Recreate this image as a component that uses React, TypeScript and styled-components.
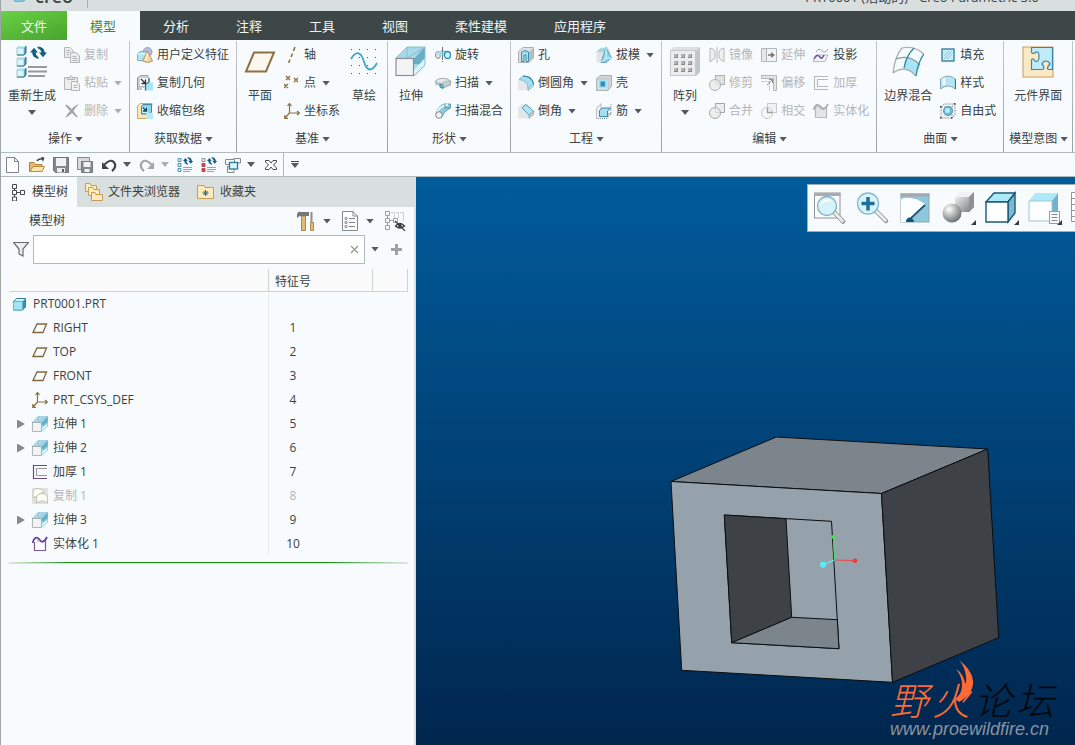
import React from 'react';
import styled, { createGlobalStyle, css } from 'styled-components';

const FONT = '"Open Sans", "Noto Sans CJK SC", sans-serif';
const C = {
  panel: '#f8fbfd',
  frame: '#d9dfde',
  line: '#b0baba',
  text: '#3c4142',
  muted: '#b2b6b8',
  dark: '#3d4748',
};

const GlobalStyle = createGlobalStyle`
  *, *::before, *::after { box-sizing: border-box; }
  body { margin: 0; font-family: ${FONT}; font-size: 12px; line-height: 16px; color: ${C.text}; }
  button, input { font: inherit; color: inherit; }
`;

/* ---------- icons ---------- */

const Cube = ({ x, y, s = 9 }: { x: number; y: number; s?: number }) => (
  <g transform={`translate(${x} ${y}) scale(${s / 9})`}>
    <path d="M0 2 2 0H9V7L7 9H0Z" fill="#4f9ab5" />
    <path d="M0 2 2 0H9L7 2Z" fill="#bdeefa" />
    <rect y="2" width="7" height="7" fill="#d9f6fd" stroke="#8cb4c2" strokeWidth=".7" />
    <path d="M9 0V7L7 9H0" fill="none" stroke="#2b6f8c" strokeWidth="1" />
  </g>
);

const Spin = ({ x, y, s = 1 }: { x: number; y: number; s?: number }) => (
  <g transform={`translate(${x} ${y}) scale(${s})`} fill="#165e80">
    <path d="M0 6.5 4 1.8 8 6.5H5.6Q5.6 9.6 8.6 11.4V13Q2.4 11.6 2.2 6.5Z" />
    <path d="M17 6.5 13 11.2 9 6.5H11.4Q11.2 3.8 7.6 2.2V.4Q14.4 1 14.8 6.5Z" />
  </g>
);

const Extrude = ({ s = 1 }: { s?: number }) => (
  <g transform={`scale(${s})`}>
    <path d="M1 12 12 1H30V20L19 30Z" fill="#a9deef" />
    <path d="M12 1H30L18 13H1Z" fill="#a8d9ea" />
    <path d="M30 1V20L19 13Z" fill="#5fa3bd" />
    <path d="M30 1 19 13V18L30 19Z" fill="#6aaec7" />
    <path d="M19 30 30 19V12L19 24Z" fill="#d8f5fd" />
    <path d="M1 12 12 1H30V19L19 30M12 1V12M12 12 30 1" fill="none" stroke="#8dbccb" strokeWidth="1" />
    <rect x="1" y="12.500" width="17.500" height="17" fill="#f4f4f4" stroke="#8b9094" strokeWidth="1.200" />
  </g>
);

const icons: Record<string, React.ReactNode> = {
  regenerate: (
    <>
      <Cube x={1} y={0} />
      <Cube x={1} y={11} />
      <Cube x={1} y={22} />
      <Spin x={14} y={0} />
      <path d="M12 21H31M12 25.500H31M12 30H29" stroke="#969a9c" strokeWidth="2" />
    </>
  ),
  copy: (
    <g fill="#ececec" stroke="#b3b6b7">
      <path d="M.5 .5H6L9 3.500V10.500H.5Z" />
      <path d="M2.500 3.500H6M2.500 5.500H5M2.500 7.500H5" />
      <path d="M6.500 5.500H12L15.500 9V15.500H6.500Z" />
      <path d="M8.500 9.500H12M8.500 11.500H13.500M8.500 13.500H13.500" />
    </g>
  ),
  paste: (
    <g stroke="#b3b5b6" fill="#ececec">
      <path d="M.5 2.500H13.500V14.500H.5Z" />
      <path d="M3.500 4.500V2.500H5.500Q7 -1 8.500 2.500H10.500V4.500Z" fill="#dcdcdc" />
      <path d="M7.500 6.500H12L15.500 9.500V15.500H7.500Z" fill="#f4f4f4" />
      <path d="M9.500 10.500H13.500M9.500 12.500H13.500" />
    </g>
  ),
  remove: <path d="M1 2Q3 1 7.500 6Q11 2 15 1Q11 5 9.500 8Q12 12 14 14Q12 15 8 10Q4 14 1 15Q3 11 6 8Q3 5 1 2Z" fill="#a3a5a6" />,
  udf: (
    <>
      <circle cx="10.500" cy="5" r="4.500" fill="#b9bce0" stroke="#8c90bb" strokeWidth=".8" />
      <path d="M.5 7 3 4.500H10V11L8 13.500H.5Z" fill="#b4e4f3" stroke="#6db3cb" />
      <path d="M.5 7H8V13.500" fill="none" stroke="#e8f8fd" />
      <path d="M10.500 4 15.500 14Q10.500 17 5.500 14Z" fill="#f0d6a5" stroke="#b99259" />
      <path d="M10.300 6 9 14" stroke="#fdf3dd" strokeWidth="1.500" />
    </>
  ),
  copyGeom: (
    <>
      <path d="M.5 3 3 .5H11V5L10 9H7V12H.5Z" fill="#c9ced1" stroke="#a1a7aa" />
      <path d="M.5 3V15M.5 14H5" stroke="#8d9295" />
      <rect x="3" y="3" width="8" height="8" fill="#fff" />
      <path d="M4 4 8 8M8.500 4.500V8.500H4.500" stroke="#21323b" strokeWidth="1.300" fill="none" />
      <path d="M8.500 10 11.500 7.500H16V15.500H8.500Z" fill="#a9e4f6" />
      <path d="M12 3V7L8.500 9.500V15.500" fill="none" stroke="#24708f" strokeWidth="1.300" />
    </>
  ),
  shrink: (
    <>
      <path d="M.5 3 3 .5H15L13 15.500H.5Z" fill="#fbe8b9" stroke="#cfaa62" />
      <path d="M4.500 3.500 6 1.500H14.500V9L12.500 11H4.500Z" fill="#8ed2e6" stroke="#3f88a4" />
      <rect x="5" y="4" width="6" height="6" fill="#c7eefa" />
      <path d="M6 4.500 9 7.500M9.500 4.500V8H6" stroke="#0c475f" strokeWidth="1.300" fill="none" />
      <rect x="9.500" y="10" width="6.500" height="6" fill="#b9e9f8" />
    </>
  ),
  plane: <path d="M10 6.500H30L22 25.500H2Z" fill="#fbf7ee" stroke="#8b7243" strokeWidth="2" />,
  axis: <path d="M11 0 9.500 4M8.500 6.500 7 10M6 12.500 4.500 16" stroke="#8f753f" strokeWidth="1.600" />,
  point: (
    <path
      d="M2 1 6 5M6 1 2 5M10 3 14 7M14 3 10 7M0 9 4 13M4 9 0 13"
      stroke="#8a6f38"
      strokeWidth="1.400"
    />
  ),
  csys: (
    <path
      d="M5.500 1V10H15M5.500 10 1 15M3.500 3 5.500 .5 7.500 3M13 8 15.500 10 13 12M.8 12V15.300H4"
      fill="none"
      stroke="#8a713d"
      strokeWidth="1.200"
    />
  ),
  sketch: (
    <>
      <path
        d="M3 3.500H29M3 11.500H29M3 19.500H29M3 27.500H29"
        stroke="#565b5d"
        strokeWidth="1"
        strokeDasharray="1 7"
      />
      <path d="M3 13Q8 4 13 9C17 14 16 23 22 23.500Q26 23 29 17" fill="none" stroke="#3ea6cf" strokeWidth="1.800" />
    </>
  ),
  extrudeBig: <Extrude />,
  extrude: <Extrude s={0.52} />,
  revolve: (
    <>
      <ellipse cx="3" cy="8" rx="2.500" ry="3.500" fill="#e3e5e6" stroke="#8b9093" />
      <path d="M3 5Q8 1 13 5V11Q8 6 4 10Z" fill="#a7daea" />
      <ellipse cx="12.500" cy="8" rx="3" ry="3.500" fill="#c9f0fb" stroke="#2e8db3" strokeWidth="1.300" />
      <path d="M7.500 0V16" stroke="#6d7274" strokeDasharray="5 1 1 1" />
    </>
  ),
  sweep: (
    <>
      <path d="M.5 6Q5 2 12 4L15.500 6V10L8 13 5 12V9L1 9.500Z" fill="#c5cdd1" stroke="#929b9f" strokeWidth=".8" />
      <path d="M5 9V12L8 13.500V10Z" fill="#7cc9e2" stroke="#287392" strokeWidth=".8" />
      <path d="M.5 6Q5 2 12 4L15.500 6Q10 5.500 7 8" fill="#e3e9eb" stroke="#9aa2a6" strokeWidth=".6" />
    </>
  ),
  blend: (
    <>
      <path d="M1 11Q2 4 9 1H15.500V5Q9 8 7 14Z" fill="#8bcbe0" stroke="#4d8ca6" strokeWidth=".8" />
      <path d="M2 9Q5 3 13 1.500" stroke="#e1f6fb" strokeWidth="2" fill="none" />
      <circle cx="4" cy="12" r="3.300" fill="#f1f1f1" stroke="#85898b" />
      <path d="M10 1V5H15" fill="none" stroke="#4d8ca6" strokeWidth=".8" />
    </>
  ),
  hole: (
    <>
      <path d="M.5 4.500 5 .5H15.500V11L11 15.500H.5Z" fill="#dde1e2" stroke="#aab0b2" />
      <path d="M11 5 15 1.500V11L11 15Z" fill="#b7bdc0" />
      <path d="M3.500 5Q7 2 10.500 5V14.500H8V8H6V14.500H3.500Z" fill="#a4e0f3" stroke="#3a8fae" />
    </>
  ),
  draft: (
    <>
      <path d="M.5 4 5 .5H11L14 3V8L7 15.500H.5Z" fill="#e1e4e5" />
      <path d="M.5 5 5 1H11L8 5Z" fill="#9fd6e8" />
      <path d="M10 .5 15.500 11 10 15.500H5Z" fill="#8fd2e8" stroke="#4590ac" strokeWidth=".8" />
      <path d="M10 1V11L5 15M10 11H15" stroke="#d7f6fe" fill="none" />
    </>
  ),
  round: (
    <>
      <path d="M0 5 4 1H12Q16 4 15 10L9 15.500H0Z" fill="#e6e8e9" />
      <path d="M5 1Q14 1 15.500 9L10 13.500Q10 5 1 4.500Z" fill="#a5def1" stroke="#6fb2cb" strokeWidth=".8" />
      <path d="M5 1Q14 1 15.500 9" fill="none" stroke="#2f88a8" strokeWidth="1.200" />
      <path d="M10 13.500V15.500L15.500 11V9" stroke="#7f989f" fill="none" strokeWidth=".8" />
    </>
  ),
  shell: (
    <>
      <path d="M.5 4 4 .5H15.500V11L12 15.500H.5Z" fill="#d2d6d8" stroke="#a9afb1" />
      <rect x="1" y="4" width="11" height="11" fill="#eef1f2" stroke="#b7bcbf" />
      <rect x="3.500" y="5.500" width="6.500" height="7" fill="#3d8bab" stroke="#a3dff3" strokeWidth="2" />
    </>
  ),
  chamfer: (
    <>
      <path d="M0 5 4 1H8L15.500 8V11L10 15.500H0Z" fill="#e4e6e7" />
      <path d="M4 5 8 1.500 15.500 8 11 12Z" fill="#b0e5f5" stroke="#3a8aa8" strokeWidth=".8" />
      <path d="M11 12V15.500L15.500 11.500V8" fill="#c5cbce" stroke="#8ca0a8" strokeWidth=".7" />
    </>
  ),
  rib: (
    <>
      <path d="M.5 15.500V5L5 .5V10.500L15.500 10.500 11 15.500Z" fill="#eef0f1" stroke="#7d8b91" strokeDasharray="1 1" />
      <path d="M3.500 7.500 6 5H15L11.500 8V13.500H3.500Z" fill="#a3dff1" stroke="#3a8aa8" />
      <path d="M15 1V10L11.500 13.500" stroke="#8c989c" fill="none" strokeDasharray="1 1" />
    </>
  ),
  pattern: (
    <>
      <path d="M1 5 5 1H31V26L27 30H1Z" fill="#c2c4c5" />
      <path d="M1 5 5 1H31L27 5Z" fill="#dedfdf" />
      <rect x="1.500" y="4.500" width="25" height="25" fill="#ececec" stroke="#c7c8c9" />
      {[8, 15, 22].map(y =>
        [5, 12, 19].map(x => (
          <g key={`${x}-${y}`}>
            <rect x={x} y={y} width="4" height="4" fill="#b3b5b6" />
            <path d={`M${x} ${y + 3.5}H${x + 3.5}V${y}`} fill="none" stroke="#85898b" />
          </g>
        )),
      )}
    </>
  ),
  mirror: (
    <g fill="#efefef" stroke="#b5b8b9">
      <path d="M1 1Q6 2 6 6V11L1 15Z" />
      <path d="M15 1Q10 2 10 6V11L15 15Z" />
      <path d="M8 0V16" />
    </g>
  ),
  extend: (
    <g fill="#f3f3f3" stroke="#b3b6b8">
      <path d="M.5 1.500H7.500V14.500H.5Z" fill="#e6e7e7" />
      <path d="M5.500 1.500H15.500V14.500H5.500Z" />
      <path d="M7 8H11" stroke="#757a7c" strokeWidth="1.500" />
      <path d="M10 5 14 8 10 11Z" fill="#757a7c" stroke="none" />
    </g>
  ),
  project: (
    <>
      <path d="M3 5Q6 0 9 4Q12 7 15 2" fill="none" stroke="#a0a5a7" />
      <path d="M0 14 3 8H15L12 14.500H0Z" fill="#f0f1f1" stroke="#a9adaf" strokeWidth=".8" />
      <path d="M1 12Q4 6 7 10Q9 13 11 8" fill="none" stroke="#7b4ea0" strokeWidth="1.500" />
    </>
  ),
  trim: (
    <g stroke="#b0b3b4" fill="#e0e1e1">
      <rect x="6.500" y=".5" width="9" height="9" />
      <circle cx="6" cy="10" r="5.500" fill="#e9e9e9" fillOpacity=".8" />
    </g>
  ),
  offset: (
    <g stroke="#b3b6b8" fill="none">
      <path d="M.5 3.500V.5H15.500V15.500H12.500V3.500H.5Z" fill="#e3e4e4" />
      <path d="M.5 6.500H8.500V15.500" strokeDasharray="2 1" />
      <path d="M6 10 11 5M8 4.500H11.500V8" stroke="#8a8e90" />
    </g>
  ),
  thicken: <path d="M15 1.500H1.500V14.500H15M15 4.500H4.500V11.500H15" fill="none" stroke="#b6b9ba" strokeWidth="1.100" />,
  merge: (
    <g stroke="#a3a6a8" fill="#ededed">
      <path d="M6.500 4.500V.5H15.500V9.500H11.500" />
      <circle cx="6" cy="10" r="5.500" />
      <path d="M6.500 4.500V9.500H11" stroke="#d2d4d5" />
    </g>
  ),
  intersect: (
    <g stroke="#c5c8c9" fill="#f3f3f3">
      <rect x="6.500" y=".5" width="9" height="9" />
      <circle cx="6" cy="10" r="5.500" fillOpacity=".6" />
      <path d="M6.500 5V9.500H11.500" stroke="#9a9e9f" strokeWidth="1.300" fill="none" />
    </g>
  ),
  solidify: (
    <>
      <path d="M2.500 5V14.500H13.500V4Q10 8 8 5Q5 2 2.500 5Z" fill="#e3e4e4" stroke="#b7babb" strokeWidth="1.200" />
      <path d="M.5 7Q3 -1 7 3Q11 9 15 1" fill="none" stroke="#a3a6a8" strokeWidth="1.500" />
    </>
  ),
  boundary: (
    <>
      <path d="M1 27Q3 10 10 2Q22 -1 32 8Q26 16 24 30Q14 18 1 27Z" fill="#f3fbfd" />
      <path d="M14 12Q23 12 28 19L24 30Q17 23 12 22.500Z" fill="#a8e4f5" />
      <path d="M1 27Q3 10 10 2Q22 -1 32 8M1 27Q14 18 24 30" fill="none" stroke="#a3a9ac" strokeWidth="1.200" />
      <path d="M4 13Q18 8 28 19" fill="none" stroke="#8d979b" strokeWidth="1.200" />
      <path d="M22 2Q14 10 12 22M32 8Q26 16 24 30" fill="none" stroke="#2f88a8" strokeWidth="1.300" />
    </>
  ),
  fill: (
    <>
      <rect x="2" y="2" width="12" height="12" fill="#c5edf9" stroke="#3a819e" strokeWidth="1.400" />
      <path d="M4 9 9 4M4 12 12 4M7 12 12 7" stroke="#8fc8da" />
    </>
  ),
  style: (
    <>
      <path d="M.5 4Q8 -2 15.500 4V14Q8 8 .5 14Z" fill="#b3e5f5" stroke="#86aab7" />
      <path d="M4 3V10" stroke="#eafaff" strokeWidth="3" />
      <path d="M15.500 4V14" stroke="#2d7c9b" strokeWidth="1.200" />
    </>
  ),
  freestyle: (
    <>
      <path d="M1 4 4 1H15V12L12 15H1ZM1 4H12V15M12 4 15 1" fill="#f5f5f5" stroke="#8f9496" strokeDasharray="2 1" />
      <circle cx="8" cy="8" r="4.500" fill="#6bbad6" stroke="#4a9cba" />
      <circle cx="7.500" cy="7.500" r="2.500" fill="#bfeafa" />
      <path d="M0 3H1.500V4.500H0ZM14 0H15.500V1.500H14ZM0 14H1.500V15.500H0ZM11 14H12.500V15.500H11Z" fill="#3d4244" />
    </>
  ),
  interfaceBig: (
    <>
      <rect x="1" y="1" width="30" height="30" fill="#fbe9c5" stroke="#c59d5f" />
      <path
        d="M9.500 1.500H30.500V23.500H27C24 23 26 20 28 18Q27 15 24 15Q21 15 20 18C22 20 23 23 20 23.500H9.500V14C10 12 12 13 13 15Q17 17 17 10Q17 5 14 6C12 8 10 8 9.500 6Z"
        fill="#c0ecfa"
        stroke="#3d87a4"
        strokeWidth="1.200"
      />
    </>
  ),
  newFile: <path d="M1.500 .5H9.500L13.500 4.500V15.500H1.500ZM9.500 .5V4.500H13.500" fill="#fff" stroke="#7d8386" />,
  open: (
    <>
      <path d="M.5 14.500V5.500H5L6.500 7.500H13V14.500Z" fill="#e5b96b" stroke="#b2823b" />
      <path d="M1 14.500 4 9.500H15.500L13 14.500Z" fill="#fde5ab" stroke="#bb8b43" />
      <path d="M8 4Q9 1.500 13 2" stroke="#3f4547" strokeWidth="1.500" fill="none" />
      <path d="M12 0 15.500 .5 14 5Z" fill="#3f4547" />
    </>
  ),
  save: (
    <>
      <path d="M.5 .5H15.500V15.500H2.500L.5 13.500Z" fill="#85898b" stroke="#6d7274" />
      <rect x="3" y="1" width="10" height="8" fill="#f1f2f2" />
      <path d="M4 11H12V15.500H4Z" fill="#ececec" />
      <rect x="9" y="12" width="2" height="3" fill="#585d60" />
    </>
  ),
  saveAs: (
    <>
      <path d="M.5 .5H12.500V12.500H.5Z" fill="#d8dadb" stroke="#84898b" />
      <path d="M4.500 4.500H15.500V15.500H4.500Z" fill="#85898b" stroke="#777c7e" />
      <path d="M6.500 5H13.500V10H6.500ZM7.500 12H12.500V15H7.500Z" fill="#f1f1f1" />
    </>
  ),
  undo: (
    <>
      <path d="M3 8Q11 0 14 7Q15 11 11 14" fill="none" stroke="#3f4547" strokeWidth="2.200" />
      <path d="M1 5V12H8Z" fill="#3f4547" />
    </>
  ),
  redo: (
    <>
      <path d="M13 8Q5 0 2 7Q1 11 5 14" fill="none" stroke="#a2a6a8" strokeWidth="2.200" />
      <path d="M15 5V12H8Z" fill="#a2a6a8" />
    </>
  ),
  regenSmall: (
    <>
      <path d="M1 1.500H4V4.500H1ZM1 6.500H4V9.500H1ZM1 11.500H4V14.500H1Z" fill="#bceaf8" stroke="#5a9ab3" />
      <Spin x={6} y={0} s={0.6} />
      <path d="M6 10.500H15M6 12.500H15M6 14.500H13" stroke="#9da1a3" />
    </>
  ),
  regenRed: (
    <>
      <path d="M1 1.500H4V4.500H1Z" fill="#eef0f1" stroke="#8f9597" />
      <path d="M1 6.500H4V9.500H1ZM1 11.500H4V14.500H1Z" fill="#d64a4f" stroke="#b8474c" />
      <Spin x={6} y={0} s={0.6} />
      <path d="M6 10.500H15M6 12.500H15M6 14.500H13" stroke="#9da1a3" />
    </>
  ),
  windows: (
    <>
      <path d="M.5 2.500H9.500V7.500H.5ZM2.500 9.500H9V15.500H2.500ZM8.500 1.500H15.500V6H12" fill="#f5f6f6" stroke="#858b8e" />
      <rect x="4.500" y="5.500" width="8" height="6.500" fill="#dff6fd" stroke="#2c7a99" strokeWidth="1.300" />
    </>
  ),
  closeWin: (
    <path
      d="M2.500 3.500H6L8 6 10 3.500H13.500V5L10.500 8 13.500 11V12.500H10L8 10 6 12.500H2.500V11L5.500 8 2.500 5Z"
      fill="#fff"
      stroke="#454a4c"
    />
  ),
  tree: (
    <path
      d="M3.500 1.500H7.500V5.500H3.500ZM3.500 7.500H7.500V11.500H3.500ZM3.500 14H7.500V18H3.500ZM11.500 7.500H15.500V11.500H11.500ZM5.500 5.500V7.500M5.500 11.500V14M7.500 9.500H11.500"
      fill="none"
      stroke="#454a4c"
    />
  ),
  folders: (
    <g fill="#fdebbd" stroke="#c59c58">
      <path d="M.5 8.500V.5H5L6 2.500H11.500V8.500Z" />
      <path d="M3.500 12.500V4.500H8L9 6.500H14.500V12.500Z" />
      <path d="M6.500 17.500V9.500H10L11 11.500H17.500V17.500Z" />
    </g>
  ),
  favorites: (
    <>
      <path d="M.5 15.500V2.500H7L8 4.500H16.500V15.500Z" fill="#fdebbd" stroke="#c59c58" />
      <path d="M8.500 7V13M5.500 10H11.500M6.500 8 10.500 12M10.500 8 6.500 12" stroke="#2b6882" />
    </>
  ),
  tools: (
    <>
      <path d="M4.500 5H8.500V19.500H4.500Z" fill="#e2ba78" stroke="#a98750" />
      <path d="M0 3Q1 0 4 1H12V5H4Q2 5 0 7Z" fill="#74797c" />
      <path d="M14.500 1V12" stroke="#8a8f92" strokeWidth="2" />
      <path d="M13.500 11.500H16.500V19.500H13.500Z" fill="#e7be75" stroke="#a98750" />
    </>
  ),
  listDoc: (
    <>
      <path d="M.5 .5H11L15.500 5V19.500H.5Z" fill="#fdfdfd" stroke="#85898b" />
      <path d="M11 .5V5H15.500" fill="none" stroke="#85898b" />
      <path d="M7 7.500H13M7 11.500H13M7 15.500H13" stroke="#7d8284" />
      <path d="M3 6.500H5V8.500H3ZM3 10.500H5V12.500H3ZM3 14.500H5V16.500H3Z" fill="none" stroke="#7d8284" strokeWidth=".8" />
    </>
  ),
  treeEye: (
    <>
      <path
        d="M.5 .5H4.500V4.500H.5ZM.5 7.500H4.500V11.500H.5ZM.5 14.500H4.500V18.500H.5ZM8.500 7.500H12.500V11.500H8.500ZM2.500 4.500V7.500M2.500 11.500V14.500M4.500 9.500H8.500"
        fill="none"
        stroke="#9b9fa1"
      />
      <path d="M6 1.500H9.500V7M11 1.500H13.500V7M15 1.500H18.500V10" fill="none" stroke="#ced1d2" />
      <path d="M10.500 15Q15 10 19.500 15Q15 19 10.500 15Z" fill="#fff" stroke="#34393b" strokeWidth="1.300" />
      <circle cx="15" cy="14.800" r="1.800" fill="#34393b" />
      <path d="M10 10 20 20" stroke="#34393b" strokeWidth="1.100" />
    </>
  ),
  funnel: <path d="M.5 1.500H15.500L10 8V15L6 13V8Z" fill="#ededed" stroke="#666b6e" strokeWidth="1.200" />,
  clear: <path d="M1 1 8 8M8 1 1 8" stroke="#93989a" strokeWidth="1.200" />,
  plus: <path d="M5.500 0V11M0 5.500H11" stroke="#9fa3a4" strokeWidth="3" />,
  part: (
    <>
      <path d="M1.500 5.500 4.500 2.500H13.500V11L10.500 14H1.500Z" fill="#3f93b1" stroke="#347d99" />
      <path d="M2 5.500 4.500 3H13L10.500 5.500Z" fill="#d2f3fb" />
      <rect x="1.500" y="5.500" width="9" height="8.500" rx="1" fill="#9fe5f8" stroke="#6bb0c8" />
    </>
  ),
  planeSmall: <path d="M5 4H14.500L11 12.500H1Z" fill="none" stroke="#80683d" strokeWidth="1.300" />,
  thickenTree: (
    <>
      <path d="M15 1.500H1.500V14.500H15" fill="none" stroke="#6a4a85" strokeWidth="1.200" />
      <path d="M15 4.500H4.500V11.500H15" fill="none" stroke="#97939d" />
    </>
  ),
  copyTree: (
    <>
      <rect width="16" height="16" fill="#e0e2e2" />
      <path d="M1 10V4Q1 .5 6 .5Q11 .5 12 4Q7 5 5 9Q3 8 1 10Z" fill="#fdfcf5" stroke="#c4c2ae" />
      <path d="M4.500 15V10Q5 5.500 10 5.500Q15 5.500 15.500 10V15Q10 11 4.500 15Z" fill="#fdfcf5" stroke="#c4c2ae" />
    </>
  ),
  solidTree: (
    <>
      <path d="M2.500 6V14.500H13.500V5" fill="#fdfcff" stroke="#7b5a9a" strokeWidth="1.200" />
      <path d="M5 2Q9 10 13 5V6H5Z" fill="#c9c3dc" />
      <path d="M.5 7Q3 -1 7 3Q11 9 15 1" fill="none" stroke="#6c4291" strokeWidth="1.800" />
    </>
  ),
  zoomFit: (
    <>
      <rect x="1.500" y="2" width="25.500" height="25" fill="#fbfbfb" stroke="#8f9496" />
      <path d="M1 3.500H27.500" stroke="#a8adaf" strokeWidth="3" />
      <path d="M21 21 30 30.500" stroke="#909495" strokeWidth="4.500" strokeLinecap="round" />
      <path d="M21 21 29.500 30" stroke="#ececec" strokeWidth="2.800" strokeLinecap="round" />
      <circle cx="14" cy="15" r="9.500" fill="#d6f2fb" stroke="#7fb2c8" strokeWidth="1.300" />
      <path d="M8 14Q9 9 14 8Q17 8 19 10Q12 10 8 14Z" fill="#fff" />
    </>
  ),
  zoomIn: (
    <>
      <path d="M20 20 30 30" stroke="#909495" strokeWidth="4.500" strokeLinecap="round" />
      <path d="M20 20 29.500 29.500" stroke="#ececec" strokeWidth="2.800" strokeLinecap="round" />
      <circle cx="12" cy="12.500" r="10.500" fill="#d9f3fb" stroke="#86b9ce" strokeWidth="1.300" />
      <path d="M12 6V19.500M5.500 12.500H18.500" stroke="#1d6f99" strokeWidth="3.500" />
    </>
  ),
  repaint: (
    <>
      <rect x="2" y="3" width="28" height="28" fill="#8dc6dd" stroke="#8aa8b4" />
      <path d="M2 8Q13 4 26 13L9 31H2Z" fill="#fdfefe" />
      <path d="M1.500 4H30.500" stroke="#a5a8aa" strokeWidth="3" />
      <path d="M10 29 26 14" stroke="#1c5875" strokeWidth="1.800" />
      <path d="M7 31Q7 26.500 11 26.500Q15 28 15 31Z" fill="#11567a" />
    </>
  ),
  shading: (
    <>
      <defs>
        <radialGradient id="ball" cx=".35" cy=".3" r=".75">
          <stop offset="0" stopColor="#fff" />
          <stop offset="1" stopColor="#676a6b" />
        </radialGradient>
        <linearGradient id="block" x1="0" y1="0" x2="1" y2="1">
          <stop offset="0" stopColor="#fff" />
          <stop offset="1" stopColor="#6f7274" />
        </linearGradient>
      </defs>
      <path d="M13 6 18 1H32V16L27 21H13Z" fill="url(#block)" />
      <path d="M13 6 18 1H32L27 6Z" fill="#f1f1f1" />
      <path d="M32 1V16L27 21V6Z" fill="#8f9293" />
      <circle cx="10" cy="22" r="9.500" fill="url(#ball)" />
    </>
  ),
  box: (
    <g stroke="#1c5875" strokeWidth="1.400">
      <path d="M1 11 9 2H30L23 11Z" fill="#aee9fa" />
      <path d="M23 11 30 2V22L23 31Z" fill="#79b9d2" />
      <path d="M1 11H23V31H1Z" fill="#fdfefe" />
    </g>
  ),
  savedView: (
    <>
      <path d="M1 10 7 2H30L24 10Z" fill="#aee9fa" />
      <path d="M24 10 30 2V23L24 30Z" fill="#6fb3ce" />
      <path d="M1 10H24V30H1Z" fill="#fdfefe" stroke="#9fc7d6" />
      <rect x="21.500" y="20.500" width="10" height="12" fill="#fafafa" stroke="#989da0" />
      <path d="M23.500 23.500H29.500M23.500 26.500H29.500M23.500 29.500H29.500" stroke="#85898b" />
    </>
  ),
  grid: <path d="M.5 1.500H30V30.500H.5ZM0 7.500H30M0 13.500H30M0 19.500H30M0 25.500H30" fill="#fff" stroke="#8f9496" />,
};

const Svg = styled.svg`
  display: block;
  flex: none;
`;

const Icon = ({ name, w = 16, h = w }: { name: string; w?: number; h?: number }) => (
  <Svg width={w} height={h} viewBox={`0 0 ${w} ${h}`} aria-hidden>
    {icons[name]}
  </Svg>
);

const Caret = styled.span<{ $muted?: boolean }>`
  flex: none;
  width: 8px;
  height: 5px;
  background: ${p => (p.$muted ? '#a9adaf' : '#54595b')};
  clip-path: polygon(0 0, 100% 0, 50% 100%);
`;

const bareButton = css`
  border: 0;
  padding: 0;
  background: none;
  white-space: nowrap;
`;

/* ---------- window frame ---------- */

const Shell = styled.div`
  display: flex;
  flex-direction: column;
  min-height: 100vh;
  overflow: hidden;
  border-left: 1px solid #a0a4a5;
  background: ${C.panel};
`;

const TitleBar = styled.header`
  display: flex;
  align-items: flex-end;
  justify-content: space-between;
  height: 11px;
  padding: 0 36px 3px 12px;
  overflow: hidden;
  background: ${C.frame};
`;

const Brand = styled.div`
  display: flex;
  align-items: flex-end;
  gap: 4px;
  width: 75px;
  padding-bottom: 3px;
  border-right: 1px solid #a9afb0;
  font-size: 18px;
  line-height: 18px;
  font-weight: 600;
`;

const WindowTitle = styled.div`
  padding-bottom: 2px;
  font-size: 13px;
  line-height: 18px;
`;

const TabBar = styled.nav`
  display: flex;
  gap: 1px;
  height: 29px;
  background: ${C.dark};
`;

const RibbonTab = styled.button<{ $kind?: 'file' | 'active' }>`
  ${bareButton}
  padding: 0 23px;
  font-size: 13px;
  color: #f1f4f4;
  ${p =>
    p.$kind === 'file' &&
    css`
      padding: 0 20px;
      margin-right: -1px;
      background: linear-gradient(160deg, #69d145, #48a32d);
    `}
  ${p =>
    p.$kind === 'active' &&
    css`
      padding-right: 24px;
      margin-right: -1px;
      background: ${C.panel};
      color: #458a2c;
    `}
`;

/* ---------- ribbon ---------- */

const Ribbon = styled.div`
  display: flex;
  height: 113px;
  padding-top: 1px;
  border-bottom: 1px solid ${C.line};
`;

const GroupBox = styled.section`
  display: flex;
  flex: none;
  flex-direction: column;
  align-items: center;
  border-right: 1px solid;
  border-image: linear-gradient(#c3c8c9, #9ba1a3) 1;
`;

const GroupTools = styled.div`
  display: flex;
  flex: none;
  gap: 8px;
  height: 84px;
  padding: 0 7px;
`;

const GroupLabel = styled.button`
  ${bareButton}
  display: flex;
  flex: none;
  align-items: center;
  gap: 3px;
  height: 28px;
  padding: 0 4px 0 5px;
`;

const ToolColumn = styled.div`
  display: flex;
  flex-direction: column;
`;

const SmallTool = styled.button`
  ${bareButton}
  display: flex;
  align-items: center;
  gap: 4px;
  height: 28px;
  &:disabled {
    color: ${C.muted};
  }
  ${Caret} {
    margin-left: 2px;
  }
`;

const LargeTool = styled.button`
  ${bareButton}
  display: flex;
  flex-direction: column;
  align-items: center;
  gap: 6px;
  min-width: 32px;
  padding-top: 5px;
  ${Svg} {
    margin-bottom: 4px;
  }
`;

type Tool = { icon: string; label: string; menu?: boolean; off?: boolean };
type Block = { big: Tool } | { list: Tool[] };

const t = (icon: string, label: string, menu = false, off = false): Tool => ({ icon, label, menu, off });

const groups: { label: string; blocks: Block[] }[] = [
  {
    label: '操作',
    blocks: [
      { big: t('regenerate', '重新生成', true) },
      { list: [t('copy', '复制', false, true), t('paste', '粘贴', true, true), t('remove', '删除', true, true)] },
    ],
  },
  {
    label: '获取数据',
    blocks: [{ list: [t('udf', '用户定义特征'), t('copyGeom', '复制几何'), t('shrink', '收缩包络')] }],
  },
  {
    label: '基准',
    blocks: [
      { big: t('plane', '平面') },
      { list: [t('axis', '轴'), t('point', '点', true), t('csys', '坐标系')] },
      { big: t('sketch', '草绘') },
    ],
  },
  {
    label: '形状',
    blocks: [
      { big: t('extrudeBig', '拉伸') },
      { list: [t('revolve', '旋转'), t('sweep', '扫描', true), t('blend', '扫描混合')] },
    ],
  },
  {
    label: '工程',
    blocks: [
      { list: [t('hole', '孔'), t('round', '倒圆角', true), t('chamfer', '倒角', true)] },
      { list: [t('draft', '拔模', true), t('shell', '壳'), t('rib', '筋', true)] },
    ],
  },
  {
    label: '编辑',
    blocks: [
      { big: t('pattern', '阵列', true) },
      { list: [t('mirror', '镜像', false, true), t('trim', '修剪', false, true), t('merge', '合并', false, true)] },
      { list: [t('extend', '延伸', false, true), t('offset', '偏移', false, true), t('intersect', '相交', false, true)] },
      { list: [t('project', '投影'), t('thicken', '加厚', false, true), t('solidify', '实体化', false, true)] },
    ],
  },
  {
    label: '曲面',
    blocks: [
      { big: t('boundary', '边界混合') },
      { list: [t('fill', '填充'), t('style', '样式'), t('freestyle', '自由式')] },
    ],
  },
  { label: '模型意图', blocks: [{ big: t('interfaceBig', '元件界面') }] },
];

/* ---------- quick access bar ---------- */

const QuickBar = styled.div`
  display: flex;
  height: 24px;
  border-bottom: 1px solid ${C.line};
`;

const QuickTools = styled.div`
  display: flex;
  align-items: center;
  gap: 8px;
  padding: 0 4px;
  border-right: 1px solid ${C.line};
`;

const QuickButton = styled.button`
  ${bareButton}
  display: flex;
  align-items: center;
  gap: 6px;
`;

const MoreButton = styled(QuickButton)`
  flex-direction: column;
  justify-content: center;
  gap: 1px;
  padding: 0 7px;
  &::before {
    content: '';
    width: 8px;
    height: 1px;
    background: #3f4547;
  }
`;

const quick: { icon: string; label: string; menu?: boolean; muted?: boolean }[] = [
  { icon: 'newFile', label: '新建' },
  { icon: 'open', label: '打开' },
  { icon: 'save', label: '保存' },
  { icon: 'saveAs', label: '另存为' },
  { icon: 'undo', label: '撤消', menu: true },
  { icon: 'redo', label: '重做', menu: true, muted: true },
  { icon: 'regenSmall', label: '重新生成' },
  { icon: 'regenRed', label: '重新生成管理器' },
  { icon: 'windows', label: '窗口', menu: true },
  { icon: 'closeWin', label: '关闭' },
];

/* ---------- navigator ---------- */

const Workspace = styled.main`
  display: flex;
  flex: 1;
`;

const Navigator = styled.aside`
  display: flex;
  flex: none;
  flex-direction: column;
  width: 415px;
  border-right: 2px solid ${C.frame};
`;

const NavTabs = styled.div`
  display: flex;
  height: 30px;
  margin-right: -2px;
  background: ${C.frame};
`;

const NavTab = styled.button<{ $active?: boolean }>`
  ${bareButton}
  display: flex;
  align-items: center;
  gap: 5px;
  padding: 0 9px 0 8px;
  background: ${p => (p.$active ? C.panel : 'none')};
`;

const PanelHead = styled.div`
  display: flex;
  align-items: center;
  gap: 11px;
  height: 28px;
  padding: 0 8px 0 28px;
  h2 {
    flex: 1;
    margin: 0;
    font: inherit;
  }
`;

const FilterRow = styled.div`
  display: flex;
  align-items: center;
  height: 28px;
  gap: 4px;
  padding: 0 12px;
`;

const FilterBox = styled.div`
  display: flex;
  flex: 1;
  align-items: center;
  height: 29px;
  padding-right: 5px;
  border: 1px solid ${C.line};
  background: #fff;
  input {
    flex: 1;
    min-width: 0;
    height: 26px;
    padding: 0 6px;
    border: 0;
    outline: 0;
    background: none;
  }
`;

const FilterExtras = styled.div`
  display: flex;
  align-items: center;
  gap: 12px;
  padding-left: 2px;
`;

const TreeTable = styled.table`
  width: auto;
  margin: 6px 6px 0 8px;
  border-collapse: separate;
  border-spacing: 0;
  table-layout: fixed;
`;

const HeadCell = styled.th<{ $width?: number }>`
  width: ${p => (p.$width ? `${p.$width}px` : 'auto')};
  height: 23px;
  padding: 4px 0 0 6px;
  border-right: 1px solid #cdd2d3;
  border-bottom: 1px solid #cdd2d3;
  background: #fafafa;
  font-weight: 400;
  text-align: left;
`;

const TreeCell = styled.td`
  height: 24px;
  padding: 0;
  border-right: 1px solid #e9edef;
`;

const IdCell = styled.td<{ $off?: boolean }>`
  padding: 0 56px 0 0;
  text-align: center;
  color: ${p => (p.$off ? C.muted : 'inherit')};
`;

const Node = styled.div<{ $root?: boolean; $off?: boolean }>`
  display: flex;
  align-items: center;
  gap: 5px;
  padding-left: ${p => (p.$root ? 3 : 8)}px;
  color: ${p => (p.$off ? C.muted : 'inherit')};
`;

const Expander = styled.button<{ $shown: boolean }>`
  ${bareButton}
  width: 10px;
  height: 10px;
  visibility: ${p => (p.$shown ? 'visible' : 'hidden')};
  &::before {
    content: '';
    display: block;
    width: 8px;
    height: 9px;
    background: #85898b;
    clip-path: polygon(0 0, 100% 50%, 0 100%);
  }
`;

const InsertLine = styled.div`
  height: 2px;
  margin: 6px 6px 0 8px;
  border-bottom: 1px solid #cfe6cf;
  background: linear-gradient(90deg, #e5f0e5, #1d8a1d 15%, #1d8a1d 80%, #e5f0e5);
`;

const nodes = [
  { icon: 'planeSmall', label: 'RIGHT' },
  { icon: 'planeSmall', label: 'TOP' },
  { icon: 'planeSmall', label: 'FRONT' },
  { icon: 'csys', label: 'PRT_CSYS_DEF' },
  { icon: 'extrude', label: '拉伸 1', open: true },
  { icon: 'extrude', label: '拉伸 2', open: true },
  { icon: 'thickenTree', label: '加厚 1' },
  { icon: 'copyTree', label: '复制 1', off: true },
  { icon: 'extrude', label: '拉伸 3', open: true },
  { icon: 'solidTree', label: '实体化 1' },
];

/* ---------- graphics area ---------- */

const Canvas = styled.section`
  position: relative;
  flex: 1;
  min-width: 0;
  overflow: hidden;
  background: linear-gradient(#005c9c, #00264e);
`;

const Scene = styled.svg`
  position: absolute;
  inset: 0;
  width: 100%;
  height: 100%;
`;

const ViewBar = styled.div`
  position: absolute;
  top: 7px;
  right: 0;
  display: flex;
  align-items: center;
  gap: 9px;
  width: 268px;
  height: 48px;
  padding-left: 5px;
  overflow: hidden;
  border: 1px solid #a3aeb3;
  border-right: 0;
  background: ${C.panel};
`;

const ViewButton = styled.button<{ $menu?: boolean }>`
  ${bareButton}
  position: relative;
  flex: none;
  width: 34px;
  &::after {
    content: '';
    position: absolute;
    right: 0;
    bottom: 0;
    width: 5px;
    height: 5px;
    background: ${p => (p.$menu ? '#34393b' : 'none')};
    clip-path: polygon(100% 0, 100% 100%, 0 100%);
  }
`;

const Watermark = styled.div`
  position: absolute;
  right: 21px;
  bottom: 7px;
  font-style: italic;
`;

const MarkName = styled.div`
  display: flex;
  gap: 4px;
  font-family: 'Noto Sans CJK SC', sans-serif;
  font-size: 38px;
  font-weight: 300;
  line-height: 42px;
  color: #04070a;
`;

const Hot = styled.span`
  color: #ff6a36;
`;

const Flame = styled.svg`
  position: absolute;
  top: -18px;
  left: 65px;
`;

const MarkSite = styled.a`
  display: block;
  font-family: 'Liberation Sans', sans-serif;
  font-size: 18px;
  line-height: 18px;
  color: #8b939d;
  text-decoration: none;
`;

const views = [
  { icon: 'zoomFit', label: '重新调整' },
  { icon: 'zoomIn', label: '放大' },
  { icon: 'repaint', label: '重画' },
  { icon: 'shading', label: '渲染选项', menu: true },
  { icon: 'box', label: '显示样式', menu: true },
  { icon: 'savedView', label: '已保存方向', menu: true },
  { icon: 'grid', label: '视图管理器' },
];

const LargeButton = ({ tool }: { tool: Tool }) => (
  <LargeTool>
    <Icon name={tool.icon} w={32} />
    <span>{tool.label}</span>
    {tool.menu && <Caret />}
  </LargeTool>
);

const Model = () => (
  <Scene viewBox="0 0 659 568" preserveAspectRatio="xMidYMax meet" role="img" aria-label="PRT0001">
    <g stroke="#0b0d0f" strokeWidth="1" strokeLinejoin="round">
      <path d="M360.300 260 571.700 272 465.500 316.500 255 304.500Z" fill="#7b858b" />
      <path d="M255 304.500 465.500 316.500 476.500 505.300 265.700 493.300Z" fill="#96a2ab" />
      <path d="M465.500 316.500 571.700 272 582.700 460.700 476.500 505.300Z" fill="#3e4246" />
      <path d="M308.300 338 415.500 344.300 423 471.700 315.700 465.700Z" fill="#96a2ab" />
      <path d="M308.300 338 370 341.700 375.700 440.300 315.700 465.700Z" fill="#3e4246" />
      <path d="M315.700 465.700 375.700 440.300 421.300 442.700 423 471.700Z" fill="#7b858b" />
    </g>
    <g fill="none" strokeWidth="1.200">
      <path d="M418.500 383 417.500 360" stroke="#4fe05a" />
      <path d="M418.500 383 439 383.700" stroke="#e84a4a" />
      <path d="M418.500 383 407 387.700" stroke="#56f0f5" />
    </g>
    <circle cx="417.300" cy="360" r="2" fill="#42e04c" />
    <circle cx="439" cy="383.700" r="2.300" fill="#ee3a3a" />
    <circle cx="407" cy="387.700" r="3" fill="#4ff2f6" />
  </Scene>
);

export default function App() {
  return (
    <Shell>
      <GlobalStyle />
      <TitleBar>
        <Brand>
          <Icon name="part" w={18} />
          creo
        </Brand>
        <WindowTitle>PRT0001 (活动的) - Creo Parametric 3.0</WindowTitle>
      </TitleBar>
      <TabBar>
        <RibbonTab $kind="file">文件</RibbonTab>
        <RibbonTab $kind="active">模型</RibbonTab>
        {['分析', '注释', '工具', '视图', '柔性建模', '应用程序'].map(name => (
          <RibbonTab key={name}>{name}</RibbonTab>
        ))}
      </TabBar>
      <Ribbon>
        {groups.map(group => (
          <GroupBox key={group.label}>
            <GroupTools>
              {group.blocks.map((block, i) =>
                'big' in block ? (
                  <LargeButton key={i} tool={block.big} />
                ) : (
                  <ToolColumn key={i}>
                    {block.list.map(tool => (
                      <SmallTool key={tool.label} disabled={tool.off}>
                        <Icon name={tool.icon} />
                        <span>{tool.label}</span>
                        {tool.menu && <Caret $muted={tool.off} />}
                      </SmallTool>
                    ))}
                  </ToolColumn>
                ),
              )}
            </GroupTools>
            <GroupLabel>
              {group.label}
              <Caret />
            </GroupLabel>
          </GroupBox>
        ))}
      </Ribbon>
      <QuickBar>
        <QuickTools>
          {quick.map(q => (
            <QuickButton key={q.label} aria-label={q.label}>
              <Icon name={q.icon} />
              {q.menu && <Caret $muted={q.muted} />}
            </QuickButton>
          ))}
        </QuickTools>
        <MoreButton aria-label="自定义快速访问工具栏">
          <Caret />
        </MoreButton>
      </QuickBar>
      <Workspace>
        <Navigator>
          <NavTabs>
            <NavTab $active>
              <Icon name="tree" w={18} />
              模型树
            </NavTab>
            <NavTab>
              <Icon name="folders" w={18} />
              文件夹浏览器
            </NavTab>
            <NavTab>
              <Icon name="favorites" w={18} />
              收藏夹
            </NavTab>
          </NavTabs>
          <PanelHead>
            <h2>模型树</h2>
            <QuickButton aria-label="设置">
              <Icon name="tools" w={20} />
              <Caret />
            </QuickButton>
            <QuickButton aria-label="显示">
              <Icon name="listDoc" w={18} h={20} />
              <Caret />
            </QuickButton>
            <QuickButton aria-label="树列">
              <Icon name="treeEye" w={21} h={20} />
            </QuickButton>
          </PanelHead>
          <FilterRow>
            <Icon name="funnel" />
            <FilterBox>
              <input type="text" aria-label="过滤" />
              <QuickButton aria-label="清除">
                <Icon name="clear" w={9} />
              </QuickButton>
            </FilterBox>
            <FilterExtras>
              <QuickButton aria-label="过滤选项">
                <Caret />
              </QuickButton>
              <QuickButton aria-label="添加">
                <Icon name="plus" w={11} />
              </QuickButton>
            </FilterExtras>
          </FilterRow>
          <TreeTable>
            <thead>
              <tr>
                <HeadCell aria-label="名称" />
                <HeadCell $width={104}>特征号</HeadCell>
                <HeadCell $width={35} aria-label="其他" />
              </tr>
            </thead>
            <tbody>
              <tr>
                <TreeCell>
                  <Node $root>
                    <Icon name="part" />
                    PRT0001.PRT
                  </Node>
                </TreeCell>
                <IdCell />
                <td />
              </tr>
              {nodes.map((node, i) => (
                <tr key={node.label}>
                  <TreeCell>
                    <Node $off={node.off}>
                      <Expander $shown={!!node.open} aria-label="展开" />
                      <Icon name={node.icon} />
                      {node.label}
                    </Node>
                  </TreeCell>
                  <IdCell $off={node.off}>{i + 1}</IdCell>
                  <td />
                </tr>
              ))}
            </tbody>
          </TreeTable>
          <InsertLine />
        </Navigator>
        <Canvas>
          <Model />
          <ViewBar>
            {views.map(v => (
              <ViewButton key={v.label} $menu={v.menu} aria-label={v.label}>
                <Icon name={v.icon} w={34} />
              </ViewButton>
            ))}
          </ViewBar>
          <Watermark>
            <MarkName>
              <Hot>野</Hot>
              <Hot>火</Hot>
              <span>论</span>
              <span>坛</span>
            </MarkName>
            <Flame width="20" height="44" viewBox="0 0 20 44" aria-hidden>
              <path
                d="M4 0C12 6 19 15 18 24C17 33 11 38 4 42L0 39C6 34 7 30 7 24C7 18 4 13 1 9C6 12 9 17 10 23L11 23C12 14 9 6 4 0Z"
                fill="#ff6a36"
              />
            </Flame>
            <MarkSite href="#">www.proewildfire.cn</MarkSite>
          </Watermark>
        </Canvas>
      </Workspace>
    </Shell>
  );
}
